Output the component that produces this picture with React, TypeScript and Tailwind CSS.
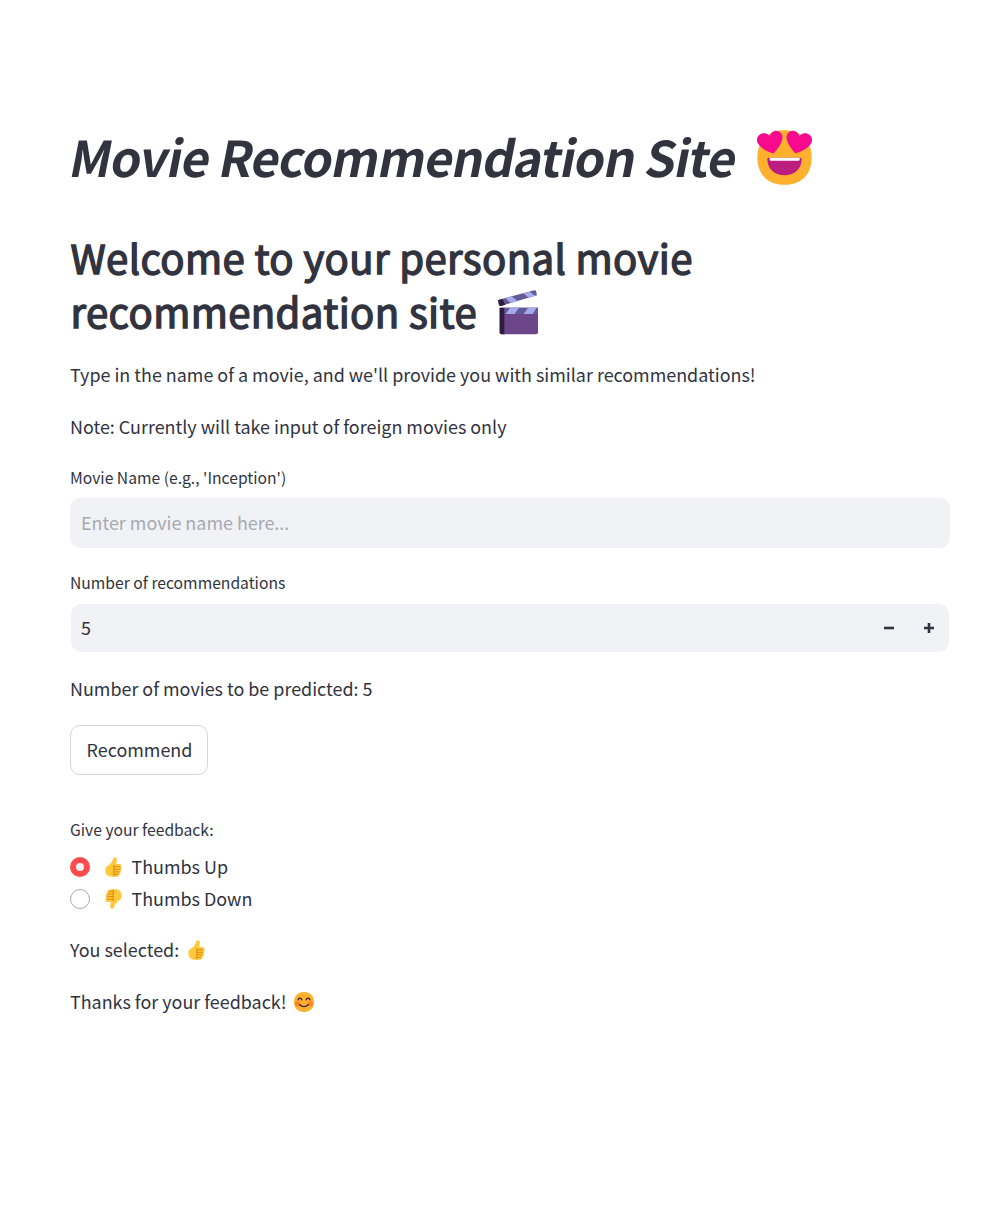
import React, { useState } from "react";

function HeartEyes() {
  return (
    <svg className="h-[55px] w-[55px] shrink-0" viewBox="38 29 165 165" aria-hidden="true">
      <path fill="#FFB02E" d="M120.500 193.500C175 193.500 202 157 202 112C202 67 175 30 120.500 30C66 30 39 67 39 112C39 157 66 193.500 120.500 193.500Z" />
      <path fill="#F70A8D" d="M88 99C82 99 47 86 39 66C34 50 47 38 60 39C67 40 73 43 76 48C78 38 86 31 96 31C110 32 118 46 113 60C109 75 96 91 88 99Z" />
      <path fill="#F70A8D" d="M153 99C159 99 194 86 202 66C207 50 194 38 181 39C174 40 168 43 165 48C163 38 155 31 145 31C131 32 123 46 128 60C132 75 145 91 153 99Z" />
      <path fill="#BB1D80" d="M73 112H168Q172 112 172 117C172 145 151 165 120.500 165C90 165 69 145 69 117Q69 112 73 112Z" />
      <path fill="#fff" d="M76 112H166V118Q166 121 162 121H80Q76 121 76 118Z" />
    </svg>
  );
}

function Clapper() {
  return (
    <svg className="h-[45px] w-[41px] shrink-0" viewBox="39 29 123 135" aria-hidden="true">
      <path fill="#635994" d="M41 58L148 30Q152 29 153 33L156 45L47 77Q43 77 42 73L39 61Z" />
      <path fill="#321B41" d="M39 60L52 56L61 73L47 77Q43 77 42 73Z" />
      <path fill="#A5A9EE" d="M61 53L80 48L97 62L77 68ZM115 39L134 34L151 46L131 52Z" />
      <path fill="#6D4589" d="M44 82H159V156Q159 162 153 162H50Q44 162 44 156Z" />
      <path fill="#635994" d="M57 82H159V101H57Z" />
      <path fill="#A5A9EE" d="M75 82H102L89 101H62ZM129 82H155L143 101H116Z" />
      <path fill="#321B41" d="M44 84Q44 82 47 82H58V162H50Q44 162 44 156Z" />
    </svg>
  );
}

function Thumb({ className = "" }: { className?: string }) {
  return (
    <svg className={"h-5 w-[17px] shrink-0 " + className} viewBox="0 0 17 20" aria-hidden="true">
      <path fill="#FFC83D" d="M8.300 1.200C8.500.2 9.400 0 10.200.2C11.500.6 12 1.800 11.800 3.200L11.200 7H14.500C16 7 16.600 8 16.200 9.300C16.800 10 16.800 11.200 16.100 12C16.500 13 16.200 14.100 15.500 14.700C15.800 16 15.100 17 14.100 17.300C14.100 18.800 13.400 19.700 11.900 19.700H6.500C2.800 19.700.4 17.400.4 14V12.500C.4 10.200 1.500 9.200 3.400 8.200C5.400 7.100 7.500 4.400 8.300 1.200Z" />
      <path fill="none" stroke="#D67D00" strokeWidth=".8" strokeLinecap="round" d="M8.800 8.500V19M9 9.700H14.700M9 12.300H14.700M9 14.900H14.200M9 17.400H13" />
    </svg>
  );
}

function Smile() {
  return (
    <svg className="mt-px h-5 w-5 shrink-0" viewBox="2 2 28 28" aria-hidden="true">
      <path fill="#FFB02E" d="M16 30C25.300 30 30 23.700 30 16S25.300 2 16 2S2 8.300 2 16S6.700 30 16 30Z" />
      <circle cx="7" cy="18.500" r="3.700" fill="#FF822D" />
      <circle cx="25" cy="18.500" r="3.700" fill="#FF822D" />
      <path fill="none" stroke="#402A32" strokeWidth="1.800" strokeLinecap="round" d="M7.500 13C8.300 10 12.200 10 13 13M19 13C19.800 10 23.700 10 24.500 13M10 19.500C13 23.500 19 23.500 22 19.500" />
    </svg>
  );
}

const label = "h-6 text-[15.68px] leading-6 whitespace-nowrap";

export default function App() {
  const [count, setCount] = useState(5);
  const [up, setUp] = useState(true);
  const [name, setName] = useState("");
  return (
    <main className="min-h-[1218px] w-[1004px] bg-white pt-[123px] pr-[54px] pl-[70px] font-['Noto_Sans_CJK_SC','Open_Sans',sans-serif] text-[17.92px] leading-8 text-[#31333F]">
      <h1 className="-ml-[3px] flex h-[66px] items-start text-[49.2px] leading-[66px] font-bold tracking-[-0.98px] whitespace-nowrap">
        <span className="block w-[690.4px] origin-[0_55px] -skew-x-[11deg]">Movie Recommendation Site</span>
        <span className="mt-[7px]"><HeartEyes /></span>
      </h1>
      <h2 className="mt-[41px] pl-[0.5px] text-[40.1px] leading-[54px] font-normal tracking-[0.39px] whitespace-nowrap [-webkit-text-stroke:1.4px_#31333F]">
        Welcome to your personal movie
        <span className="flex">
          <span className="w-[427.5px]">recommendation site</span>
          <span className="mt-1.5"><Clapper /></span>
        </span>
      </h2>
      <p className="mt-5">Type in the name of a movie, and we'll provide you with similar recommendations!</p>
      <p className="mt-5">Note: Currently will take input of foreign movies only</p>

      <p className={label + " mt-6"}>Movie Name (e.g., 'Inception')</p>
      <input
        className="mt-2 block h-[50px] w-full rounded-[10px] bg-[#F0F2F6] px-[11px] pb-0.5 outline-none placeholder:text-[#A8A9B0]"
        placeholder="Enter movie name here..."
        value={name}
        onChange={(e) => setName(e.target.value)}
      />
      <p className={label + " mt-[23px]"}>Number of recommendations</p>
      <div className="mx-px mt-[9px] flex h-12 items-center rounded-[10px] bg-[#F0F2F6] pl-2.5">
        <span className="flex-1 pb-0.5">{count}</span>
        <button className="flex h-12 w-10 items-center justify-center" aria-label="Decrease" onClick={() => setCount(Math.max(1, count - 1))}>
          <svg className="h-2.5 w-2.5" viewBox="0 0 10 10"><path fill="#31333F" d="M0 3.700H10V6.300H0Z" /></svg>
        </button>
        <button className="flex h-12 w-10 items-center justify-center" aria-label="Increase" onClick={() => setCount(count + 1)}>
          <svg className="h-2.5 w-2.5" viewBox="0 0 10 10"><path fill="#31333F" d="M0 3.700H3.700V0H6.300V3.700H10V6.300H6.300V10H3.700V6.300H0Z" /></svg>
        </button>
      </div>
      <p className="mt-5">Number of movies to be predicted: {count}</p>
      <button className="mt-[21px] flex h-[50px] w-[138px] items-center justify-center rounded-[10px] border border-[#D6D6D9] pb-0.5 pl-px">Recommend</button>

      <p className={label + " mt-[43px]"}>Give your feedback:</p>
      <div className="mt-[9px]">
        <div className="flex h-8 items-center" onClick={() => setUp(true)}>
          <span className={up ? "h-5 w-5 rounded-full border-6 border-[#FF4B4B] bg-[#F0F2F6]" : "h-5 w-5 rounded-full border border-[#A9AAB0]"} />
          <Thumb className="ml-[15px]" />
          <span className="ml-[9.5px] pb-0.5">Thumbs Up</span>
        </div>
        <div className="flex h-8 items-center" onClick={() => setUp(false)}>
          <span className={up ? "h-5 w-5 rounded-full border border-[#A9AAB0]" : "h-5 w-5 rounded-full border-6 border-[#FF4B4B] bg-[#F0F2F6]"} />
          <Thumb className="ml-[15px] rotate-180" />
          <span className="ml-[9.5px] pb-0.5">Thumbs Down</span>
        </div>
      </div>
      <p className="mt-[18px] flex items-center">
        <span className="w-[118px]">You selected:</span>
        <Thumb className={up ? "mt-px" : "rotate-180"} />
      </p>
      <p className="mt-5 flex items-center">
        <span className="w-56">Thanks for your feedback!</span>
        <Smile />
      </p>
    </main>
  );
}
